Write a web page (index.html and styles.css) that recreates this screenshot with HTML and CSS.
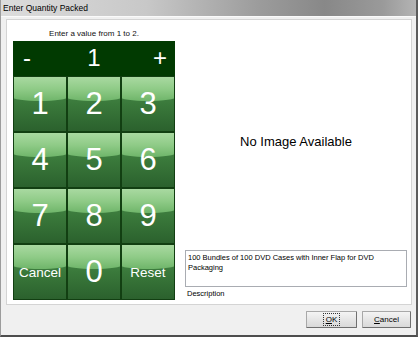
FILE: index.html
```html
<!DOCTYPE html>
<html lang="en">
<head>
    <meta charset="UTF-8">
    <title>Enter Quantity Packed</title>
    <link rel="stylesheet" href="styles.css">
</head>
<body>
    <div class="dialog">
        <div class="titlebar">Enter Quantity Packed</div>

        <div class="panel">
            <div class="pad-col">
                <div class="hint">Enter a value from 1 to 2.</div>
                <div class="qty-bar">
                    <span class="qty-step">-</span>
                    <span class="qty-value">1</span>
                    <span class="qty-step">+</span>
                </div>
                <div class="keypad">
                    <button class="key"><span>1</span></button>
                    <button class="key"><span>2</span></button>
                    <button class="key"><span>3</span></button>
                    <button class="key"><span>4</span></button>
                    <button class="key"><span>5</span></button>
                    <button class="key"><span>6</span></button>
                    <button class="key"><span>7</span></button>
                    <button class="key"><span>8</span></button>
                    <button class="key"><span>9</span></button>
                    <button class="key key-word"><span>Cancel</span></button>
                    <button class="key"><span>0</span></button>
                    <button class="key key-word"><span>Reset</span></button>
                </div>
            </div>

            <div class="info-col">
                <div class="no-image">No Image Available</div>
                <div class="desc-box">100 Bundles of 100 DVD Cases with Inner Flap for DVD Packaging</div>
                <div class="desc-label">Description</div>
            </div>
        </div>

        <div class="footer">
            <button class="win-btn win-btn-default"><span class="focus"><u>O</u>K</span></button>
            <button class="win-btn"><u>C</u>ancel</button>
        </div>
    </div>
</body>
</html>
```

FILE: styles.css
```css
html, body {
    margin: 0;
    padding: 0;
    background: #ffffff;
}
body {
    width: 419px;
    height: 339px;
    overflow: hidden;
    font-family: "Liberation Sans", Arial, sans-serif;
}
.dialog {
    width: 418px;
    height: 337px;
    box-sizing: border-box;
    background: #f0f0f0;
    border-left: 1px solid #9c9c9c;
    border-right: 2px solid #5c5c5c;
    border-bottom: 2px solid #4e4e4e;
    display: flex;
    flex-direction: column;
}
.titlebar {
    height: 16px;
    line-height: 16px;
    padding-left: 2px;
    font-size: 8.5px;
    color: #000;
    background: linear-gradient(90deg, #dcdcdc 0%, #c8c8c8 35%, #9c9c9c 62%, #888888 78%, #9a9a9a 92%, #b4b4b4 100%);
    border-bottom: 1px solid #fafafa;
}
.panel {
    margin: 2px 4px 0 5px;
    height: 284px;
    background: #ffffff;
    border: 1px solid #d4d4d4;
    padding: 0 4px 0 6px;
    display: flex;
    gap: 10px;
}
.pad-col {
    width: 162px;
    display: flex;
    flex-direction: column;
}
.hint {
    height: 21px;
    padding-top: 9px;
    box-sizing: border-box;
    font-size: 8px;
    line-height: 10px;
    text-align: center;
    color: #111;
}
.qty-bar {
    height: 33px;
    background: #013a01;
    color: #fff;
    display: flex;
    align-items: center;
    justify-content: space-between;
    padding: 0 8px 2px 10px;
    font-size: 24px;
}
.qty-value {
    margin-left: 4px;
}
.keypad {
    display: grid;
    grid-template-columns: repeat(3, 1fr);
    grid-template-rows: repeat(4, 54px);
    gap: 2px;
    padding: 1px;
    background: #123f12;
}
.key {
    position: relative;
    border: none;
    padding: 0;
    margin: 0;
    overflow: hidden;
    color: #fff;
    font-family: "Liberation Sans", Arial, sans-serif;
    font-size: 31px;
    background: linear-gradient(#4e8f4e, #3a793b 50%, #2b612d);
    cursor: pointer;
}
.key::before {
    content: "";
    position: absolute;
    left: -2px;
    right: -2px;
    top: 0;
    height: 44%;
    background: linear-gradient(#a9d9a1, #8fcb87 50%, #6fb56a);
    border-bottom-left-radius: 50% 4px;
    border-bottom-right-radius: 50% 4px;
}
.key span {
    position: relative;
}
.key-word {
    font-size: 13.5px;
}
.info-col {
    flex: 1;
    display: flex;
    flex-direction: column;
    padding-top: 21px;
}
.no-image {
    flex: 1;
    display: flex;
    align-items: center;
    justify-content: center;
    font-size: 13px;
    color: #000;
    padding-bottom: 2px;
}
.desc-box {
    height: 37px;
    box-sizing: border-box;
    border: 1px solid #a9acb2;
    padding: 2px 2px;
    font-size: 7.5px;
    line-height: 10px;
    color: #000;
    margin-top: 6px;
}
.desc-label {
    font-size: 7.5px;
    padding: 2px 0 6px 2px;
    color: #000;
}
.footer {
    flex: 1;
    display: flex;
    justify-content: flex-end;
    align-items: center;
    gap: 5px;
    padding: 0 5px 2px 0;
}
.win-btn {
    width: 49px;
    height: 17px;
    padding: 0;
    font-family: "Liberation Sans", Arial, sans-serif;
    font-size: 8px;
    color: #000;
    background: linear-gradient(#f4f4f4, #e6e6e6 50%, #d9d9d9);
    border: 1px solid #a8a8a8;
    border-right-color: #6f6f6f;
    border-bottom-color: #6f6f6f;
    border-radius: 1px;
}
.win-btn-default {
    width: 51px;
}
.focus {
    outline: 1px dotted #333;
    outline-offset: 1px;
    padding: 0 1px;
}
```
